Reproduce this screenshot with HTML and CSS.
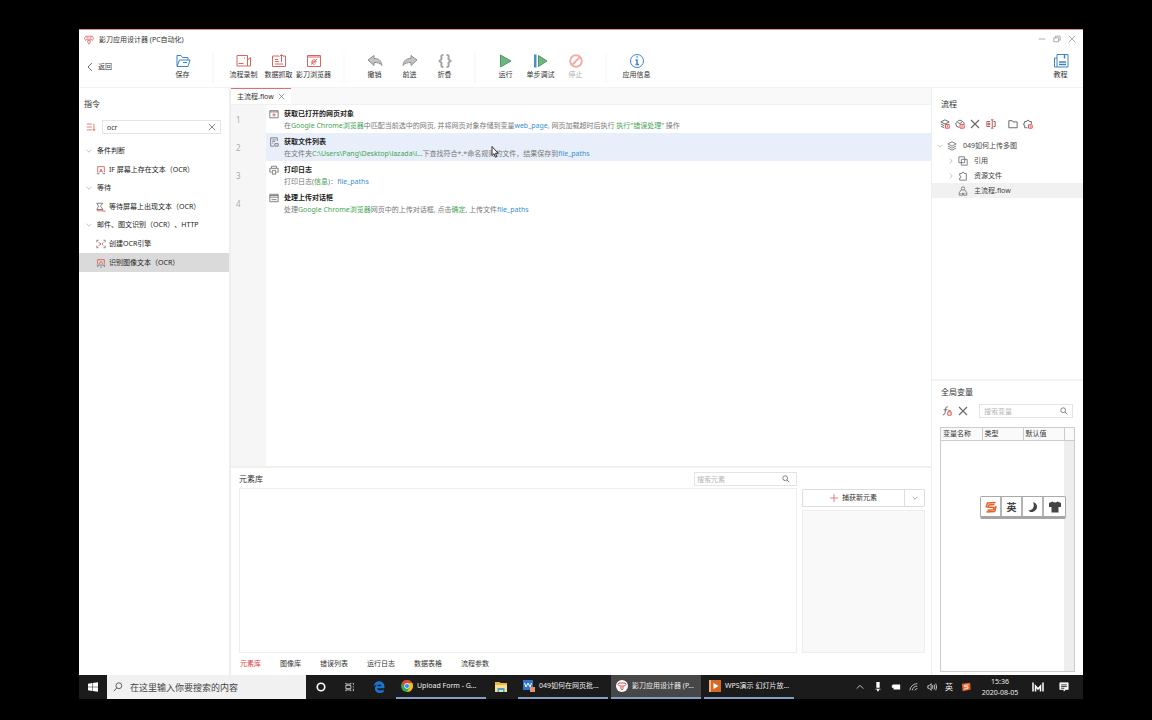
FILE: index.html
```html
<!DOCTYPE html>
<html lang="zh-CN">
<head>
<meta charset="utf-8">
<title>影刀应用设计器 (PC自动化)</title>
<link rel="stylesheet" href="styles.css">
</head>
<body>
<svg class="defs" aria-hidden="true">
  <symbol id="close" viewBox="0 0 10 10"><path d="M1 1l8 8M9 1l-8 8"/></symbol>
  <symbol id="down" viewBox="0 0 10 10"><path d="M1 3l4 4 4-4"/></symbol>
  <symbol id="right" viewBox="0 0 10 10"><path d="M3 1l4 4-4 4"/></symbol>
  <symbol id="search" viewBox="0 0 10 10"><circle cx="4" cy="4" r="3"/><path d="M6.2 6.2l3 3"/></symbol>
  <symbol id="layers" viewBox="0 0 12 12"><path d="M6 1l5 2.500L6 6 1 3.500zM1 6l5 2.500L11 6M1 8.500L6 11l5-2.500"/></symbol>
  <symbol id="logo" viewBox="0 0 12 12"><path d="M2 1.500h8L11.500 4 10 6.500 8.500 5h-5L2 6.500.500 4zM3 3.300h2.200M6.800 3.300H9M4.500 6.500h3v2L6 11 4.500 8.500z"/></symbol>
  <symbol id="sogou" viewBox="0 0 12 12"><path d="M9.500 3.500L4 4 3 6l6 .500-.500 2.300-6 .400M10.500 1.500L2.500 2 1 6.500M9.800 10.500L1.500 11M11 5l-1.200 5.500"/></symbol>
</svg>
<div class="app">
  <header class="titlebar">
    <svg class="logo red"><use href="#logo"/></svg>
    <h1>影刀应用设计器 (PC自动化)</h1>
    <div class="winbtns">
      <button aria-label="最小化"><svg viewBox="0 0 10 10"><path d="M1 5h8"/></svg></button>
      <button aria-label="还原"><svg viewBox="0 0 10 10"><path d="M1 3.500h6v5H1zM3 3.500v-2h6v5H7"/></svg></button>
      <button aria-label="关闭"><svg><use href="#close"/></svg></button>
    </div>
  </header>

  <nav class="toolbar">
    <button class="back"><svg viewBox="0 0 10 10"><path d="M7 1L3 5l4 4"/></svg>返回</button>
    <button class="tool"><svg class="blue" viewBox="0 0 16 16"><path d="M2 13V2.500h4l1.500 2H13V7M2 13.500L4.500 7H15l-2 6.500z"/><path d="M8 9.500h4"/></svg>保存</button>
    <i class="sep"></i>
    <button class="tool"><svg class="red" viewBox="0 0 16 16"><path d="M1 2.500h10.500V13H1zM11.500 7l3-2.500V13h-3M2.500 10.500h5M8 5h1"/></svg>流程录制</button>
    <button class="tool"><svg class="red" viewBox="0 0 16 16"><path d="M8 3H1.500v10.500h13V3H12M4 6.500h3M4 8.500h4M4 11h8M10.500 9V1.500M8.500 3.500l2-2 2 2"/></svg>数据抓取</button>
    <button class="tool"><svg class="red" viewBox="0 0 16 16"><path d="M1.500 2.500h13v11h-13zM1.500 4h13"/><path d="M6 9h4.200a2.200 2.200 0 1 0-.8 1.700M5 11.500L11 6"/></svg>影刀浏览器</button>
    <i class="sep"></i>
    <button class="tool"><svg viewBox="0 0 16 16"><path class="gray" d="M1 7l6-4.500v3c4.500 0 7.500 2 8 7-2-2.500-4.500-3-8-3v3z"/></svg>撤销</button>
    <button class="tool"><svg viewBox="0 0 16 16"><path class="gray" d="M15 7L9 2.500v3c-4.500 0-7.500 2-8 7 2-2.500 4.500-3 8-3v3z"/></svg>前进</button>
    <button class="tool"><svg viewBox="0 0 16 16"><path class="brace" d="M6.500 2C3.500 2 4.500 3 4.500 6L2.500 8l2 2c0 3-1 4 2 4M9.500 2c3 0 2 1 2 4l2 2-2 2c0 3 1 4-2 4"/></svg>折叠</button>
    <i class="sep"></i>
    <button class="tool"><svg viewBox="0 0 16 16"><path class="run" d="M2.500 2L13 8 2.500 14z"/></svg>运行</button>
    <button class="tool"><svg viewBox="0 0 16 16"><path class="bar" d="M1 1.500h2.500v13H1z"/><path class="run" d="M5.500 2.500L14 8l-8.500 5.500z"/></svg>单步调试</button>
    <button class="tool off" disabled><svg viewBox="0 0 16 16"><g class="stop"><circle cx="8" cy="8" r="5.800"/><path d="M4 12l8-8"/></g></svg>停止</button>
    <i class="sep"></i>
    <button class="tool"><svg class="blue" viewBox="0 0 16 16"><circle cx="8" cy="8" r="6.500"/><path class="heavy" d="M6.500 7H8v4.500M6.500 11.500h3.500M7.500 4h1.200"/></svg>应用信息</button>
    <button class="tool last"><svg class="blue" viewBox="0 0 16 16"><path d="M4 1.500h11V14H1.500V5H4zM4 5v9"/><path class="heavy" d="M11.500 1.500v4M6 9h7M6 11.500h7"/></svg>教程</button>
  </nav>

  <main class="main">
    <aside class="left">
      <h2>指令</h2>
      <div class="filter">
        <svg class="red" viewBox="0 0 12 12"><path d="M1 2.500h6M1 6h6M1 9.500h6M9.500 2v8M8 8.500l1.500 2 1.500-2"/></svg>
        <div class="field"><input type="text" value="ocr" aria-label="搜索指令"><button aria-label="清除"><svg><use href="#close"/></svg></button></div>
      </div>
      <ul class="cmds">
        <li class="group"><svg class="chev"><use href="#down"/></svg>条件判断</li>
        <li><svg viewBox="0 0 12 12"><path class="rs" d="M2 9V2h8v7M4 9l2-4 2 4"/><path d="M1 10.500h3M8 10.500h3M5 7.500h2"/></svg>IF 屏幕上存在文本（OCR）</li>
        <li class="group"><svg class="chev"><use href="#down"/></svg>等待</li>
        <li><svg viewBox="0 0 12 12"><path d="M1 1.500h7L5.500 5 8 9H1l2-4z"/><path class="rs" d="M1 10.500h6M8 8v3h3.500"/></svg>等待屏幕上出现文本（OCR）</li>
        <li class="group"><svg class="chev"><use href="#down"/></svg>邮件、图文识别（OCR）、HTTP</li>
        <li><svg viewBox="0 0 12 12"><path d="M3 1.500H1v2.500M9 1.500h2V4M3 10.500H1V8M9 10.500h2V8"/><path class="rs" d="M3 4l3 2-3 2M9 4L7 6l2 2"/></svg>创建OCR引擎</li>
        <li class="on"><svg viewBox="0 0 12 12"><path class="rs" d="M2 7V2h8v5M4 7l2-3 2 3"/><path d="M1 8.500h10M2 11V9M10 11V9M5 11h2"/></svg>识别图像文本（OCR）</li>
      </ul>
    </aside>

    <section class="center">
      <div class="tabs"><div class="tab"><span>主流程.flow</span><button aria-label="关闭标签"><svg><use href="#close"/></svg></button></div></div>
      <div class="editor">
        <ol class="steps">
          <li><span class="num">1</span><div class="step"><svg viewBox="0 0 12 12"><path d="M1 2h10v8.500H1zM1 3.500h10"/><path class="rs" d="M6 5v4M4 7h4"/></svg><div><h3>获取已打开的网页对象</h3><p>在<b>Google Chrome浏览器</b>中匹配当前选中的网页, 并将网页对象存储到变量<a href="#v">web_page</a>, 网页加载超时后执行 <b>执行"错误处理"</b> 操作</p></div></div></li>
          <li class="on"><span class="num">2</span><div class="step"><svg viewBox="0 0 12 12"><path d="M2 1h8v4M2 1v10h4M4 3.500h4M4 5.500h3M4 7.500h1M7 8h4v3H7z"/></svg><div><h3>获取文件列表</h3><p>在文件夹<b>C:\Users\Pang\Desktop\lazada\l...</b>下查找符合*.*命名规则的文件，结果保存到<a href="#v">file_paths</a></p></div></div></li>
          <li><span class="num">3</span><div class="step"><svg viewBox="0 0 12 12"><path d="M3 3.500V1.500h6v2M3 8.500H1V4h10v4.500H9M4 6.500h4V11H4z"/></svg><div><h3>打印日志</h3><p>打印日志(<b>信息</b>)：<a href="#v">file_paths</a></p></div></div></li>
          <li><span class="num">4</span><div class="step"><svg viewBox="0 0 12 12"><path d="M1 1.500h10v9H1zM1 3h10M1 5h10M3 8h6"/></svg><div><h3>处理上传对话框</h3><p>处理<b>Google Chrome浏览器</b>网页中的上传对话框, 点击<b>确定</b>, 上传文件<a href="#v">file_paths</a></p></div></div></li>
        </ol>
        <svg class="cursor" viewBox="0 0 8 12"><path d="M1 .500v9l2-1.800 1.500 3.500 1.300-.600L4.400 7.300H7z"/></svg>
      </div>
      <div class="library">
        <div class="items">
          <div class="libhead"><h2>元素库</h2><div class="field"><input type="text" placeholder="搜索元素" aria-label="搜索元素"><svg><use href="#search"/></svg></div></div>
          <div class="list"></div>
        </div>
        <div class="capture">
          <div class="split"><button><svg class="red" viewBox="0 0 10 10"><path d="M5 0v10M0 5h10"/></svg>捕获新元素</button><button class="more" aria-label="更多"><svg><use href="#down"/></svg></button></div>
          <div class="preview"></div>
        </div>
      </div>
      <div class="bottomtabs"><button class="on">元素库</button><button>图像库</button><button>错误列表</button><button>运行日志</button><button>数据表格</button><button>流程参数</button></div>
    </section>

    <aside class="right">
      <section class="flows">
        <h2>流程</h2>
        <div class="acts">
          <button aria-label="新建流程"><svg viewBox="0 0 12 12"><path d="M6 1l5 2.500L6 6 1 3.500zM1 6l4 2M1 8.500L5 10.500"/><path class="rs" d="M6.500 6.500H11V11H6.500zM8.700 7.500v2.500"/></svg></button>
          <button aria-label="新建代码"><svg viewBox="0 0 12 12"><path d="M5 10a4 4 0 0 1-4-4c0-2 1-2.500 2-3 .500-2 5-2 6 0 1 .500 2 1 2 3M3 4l3 1.500L9 3"/><path class="rs" d="M6 6.500h5V11H6zM8.500 7.500v2.500"/></svg></button>
          <button aria-label="删除"><svg><use href="#close"/></svg></button>
          <button class="w2" aria-label="重命名"><svg viewBox="0 0 12 12"><path class="rs" d="M5 3H1v6h4M7.500 1v10M6 1h3M6 11h3"/><path d="M2.500 5h2v2h-2zM9 3h2v6H9"/></svg></button>
          <button class="w3" aria-label="新建文件夹"><svg viewBox="0 0 12 12"><path d="M1 2h4l1 1.500h5v7H1z"/></svg></button>
          <button aria-label="导入"><svg viewBox="0 0 12 12"><path d="M5 10.500H2V7.500H1V5h1V3h2.500a1.500 1.500 0 0 1 3 0H10v3"/><path class="rs" d="M6.500 7H11v4H6.500zM8.700 8v2"/></svg></button>
        </div>
        <ul class="tree">
          <li><svg class="chev"><use href="#down"/></svg><svg><use href="#layers"/></svg>049如何上传多图</li>
          <li class="sub"><svg class="chev"><use href="#right"/></svg><svg viewBox="0 0 12 12"><path d="M1 1h7v7H1zM4 4h7v7H4z"/></svg>引用</li>
          <li class="sub"><svg class="chev"><use href="#right"/></svg><svg viewBox="0 0 12 12"><path d="M2 3h2.500a1.500 1.500 0 0 1 3 0H10v8H2V8.500a1.500 1.500 0 0 0 0-3z"/></svg>资源文件</li>
          <li class="sub on"><i class="chev"></i><svg viewBox="0 0 12 12"><circle cx="6" cy="3" r="2"/><path d="M4 4.500L1.500 8v3h4V8.500h1V11h4V8L8 4.500M3 9h1M8 9h1"/></svg>主流程.flow</li>
        </ul>
      </section>
      <section class="vars">
        <h2>全局变量</h2>
        <div class="varbar">
          <button aria-label="新建变量"><svg viewBox="0 0 12 12"><path d="M7 1C4 .500 4.500 3 4 6s-.500 5-3 4.500M2 4.500h4.500"/><path class="rs" d="M7 7h4v4H7zM7.500 5l3 1"/></svg></button>
          <button aria-label="删除变量"><svg><use href="#close"/></svg></button>
          <div class="field"><input type="text" placeholder="搜索变量" aria-label="搜索变量"><svg><use href="#search"/></svg></div>
        </div>
        <div class="grid">
          <table><thead><tr><th>变量名称</th><th>类型</th><th>默认值</th><th class="end"></th></tr></thead></table>
          <div class="scroll"></div>
        </div>
      </section>
    </aside>
  </main>

  <footer class="taskbar">
    <button class="start" aria-label="开始"><svg viewBox="0 0 12 12"><path d="M0 2l5-.700v4.300H0zM5.600 1.200L12 .300v5.300H5.600zM0 6.300h5v4.400L0 10zM5.600 6.300H12v5.400l-6.400-.900z"/></svg></button>
    <label class="ask"><svg viewBox="0 0 12 12"><circle cx="7" cy="4.500" r="3.500"/><path d="M4.500 7L1 11"/></svg><input type="text" placeholder="在这里输入你要搜索的内容" aria-label="搜索"></label>
    <button class="pin" aria-label="Cortana"><svg viewBox="0 0 12 12"><circle class="ring" cx="6" cy="6" r="4.500"/></svg></button>
    <button class="pin" aria-label="任务视图"><svg viewBox="0 0 12 12"><path d="M1 1v1.500h6V1M1 4h6v4H1zM1 11V9.500h6V11M10 1v2.500M10 5v1.500M10 8v3"/></svg></button>
    <button class="pin edge" aria-label="Edge"><svg viewBox="0 0 12 12"><path d="M.500 5.500C1.500-1.500 11.500-1.500 11.500 6v1.300H4.200c.300 2.700 4 2.800 6.500 1.300v2.500c-4 2-9.200.400-8.700-4 .100-1.500 1-2.700 2.300-3.300C3 3.700 1.300 4.300.500 5.500zM4.400 5.200h4c0-2.200-3.500-2.400-4 0z"/></svg></button>
    <button class="task"><svg viewBox="0 0 12 12"><circle cx="6" cy="6" r="6" fill="#35a853"/><path fill="#e94335" d="M.800 3A6 6 0 0 1 11.200 3H6a3 3 0 0 0-2.600 4.500z"/><path fill="#fbbc05" d="M11.200 3A6 6 0 0 1 6 12l2.600-4.500A3 3 0 0 0 6 3z"/><circle cx="6" cy="6" r="2.700" fill="#fff"/><circle cx="6" cy="6" r="2.100" fill="#4285f4"/></svg><span>Upload Form - G...</span></button>
    <button class="pin folder" aria-label="文件资源管理器"><svg viewBox="0 0 12 12"><path fill="#e8b64c" d="M0 1h4.500l1 1H12v9H0z"/><path fill="#fbe08a" d="M0 4h12v7H0z"/><path fill="#4a9fd8" d="M2.500 7h7v4H8V9H4v2H2.500z"/></svg></button>
    <button class="task"><svg viewBox="0 0 12 12"><path fill="#2f74d0" d="M0 0h10v10H0z"/><path stroke="#fff" fill="none" d="M1.500 3l1.500 4 2-4 2 4 1.500-4"/><path fill="#ee8e6c" d="M7 7h5v5H7z"/></svg><span>049如何在网页批...</span></button>
    <button class="task active"><svg viewBox="0 0 12 12"><circle cx="6" cy="6" r="6" fill="#fff"/><path fill="none" stroke="#d6504f" d="M3 3h6l1 1.500L8.500 6h-5L2 4.500zM5 6.500v2L6 10l1-1.500v-2"/></svg><span>影刀应用设计器 (P...</span></button>
    <button class="task"><svg viewBox="0 0 12 12"><path fill="#d56a22" d="M0 0h12v12H0z"/><path fill="#f0b088" d="M0 0h2v12H0z"/><path fill="#fff" d="M4.500 3l5 3-5 3z"/></svg><span>WPS演示 幻灯片放...</span></button>
    <div class="tray">
      <svg viewBox="0 0 12 12"><path d="M2 8l4-4 4 4"/></svg>
      <svg viewBox="0 0 12 12"><path class="solid" d="M4 0h4v7H4zM3 8h6v1H7v2H5V9H3z"/></svg>
      <svg viewBox="0 0 12 12"><path class="solid" d="M2 3h9v6H3V7H1V4h1z"/></svg>
      <svg viewBox="0 0 12 12"><path d="M1 10a9 9 0 0 1 9-8M4 10a6 6 0 0 1 6-5M7 10a3 3 0 0 1 3-2"/></svg>
      <svg viewBox="0 0 12 12"><path d="M1 4.500h1.500L5 2v8L2.500 7.500H1zM6.500 4q1 2 0 4M8.500 3q1.500 3 0 6M10.500 2q2 4 0 8"/></svg>
      <span>英</span>
      <svg viewBox="0 0 12 12"><path fill="#e8622c" stroke="none" d="M1 2l10-1 .500 8L2 11z"/><path class="white" d="M9 3.500L4 4v1.500l4.500.500L8 8 3.500 8.500"/></svg>
    </div>
    <time>15:36<br>2020-08-05</time>
    <svg class="mlogo" viewBox="0 0 12 12"><path d="M1 1.500v9M11 1.500v9M3.500 10.500V5L6 8l2.500-3v5.500"/></svg>
    <button class="note" aria-label="通知"><svg viewBox="0 0 12 12"><path fill="#fff" d="M1 1h10v8H8l-2 2V9H1z"/><path stroke="#1b1b1b" d="M2.500 3.500h7M2.500 5.500h7M2.500 7.500h4"/></svg></button>
  </footer>

  <div class="ime">
    <button aria-label="搜狗输入法"><svg class="so"><use href="#sogou"/></svg></button>
    <button>英</button>
    <button aria-label="半角"><svg viewBox="0 0 12 12"><path d="M6 1c5 1 6 8-.500 10-2 .300-3.500-.500-4-1.500C6 9.500 8 5 6 1z"/></svg></button>
    <button aria-label="皮肤"><svg viewBox="0 0 12 12"><path d="M0 2l3.500-1.500Q6 2.500 8.500.500L12 2v4H9.500v5.500h-7V6H0z"/></svg></button>
  </div>
</div>
</body>
</html>
```
FILE: styles.css
```css
* { box-sizing: border-box; margin: 0; padding: 0; }
body {
  height: 100vh;
  padding: 29px 69px 21px 79px;
  background: #000;
  color: #333;
  font: 7px/10px "Noto Sans", "Noto Sans CJK SC", sans-serif;
  text-spacing-trim: space-all;
}
button, input { font: inherit; color: inherit; background: none; border: 0; outline: 0; }
button { display: flex; align-items: center; justify-content: center; }
ul, ol { list-style: none; }
a { color: #3a8fd0; text-decoration: none; }
svg { width: 10px; height: 10px; flex: none; fill: none; stroke: #6c6c6c; stroke-width: 1; }
.defs { display: none; }
.red { stroke: #dc6460; }
.blue { stroke: #3f83c6; }
.rs { stroke: #d9534f; }
h2 { font-size: 8px; line-height: 12px; font-weight: 400; }

.app { position: relative; height: 100%; display: flex; flex-direction: column; background: #fff; border-top: 1px solid #d98a84; }
.titlebar { height: 18px; flex: none; display: flex; align-items: center; gap: 5px; padding: 2px 7px 0 5px; }
.titlebar h1 { font-size: 7px; font-weight: 400; flex: 1; }
.winbtns { display: flex; gap: 7px; padding-bottom: 2px; }
.winbtns svg { width: 8px; height: 8px; stroke: #999; }

.toolbar { height: 39px; flex: none; display: flex; align-items: flex-start; padding-top: 5px; }
.back { width: 86px; height: 28px; justify-content: flex-start; gap: 3px; padding-left: 6px; }
.tool { width: 35px; flex-direction: column; gap: 1px; white-space: nowrap; }
.tool svg { width: 16px; height: 16px; }
.sep { width: 2px; height: 30px; margin: 0 12px; background: #fafafa; }
.last { margin: 0 5px 0 auto; }
.off { color: #aaa; }
.gray { fill: #c4c4c4; stroke: #909090; }
.brace { stroke: #a5a5a5; stroke-width: 2; }
.run { fill: #71b483; stroke: #4b9a60; }
.bar { fill: #4c8bc8; stroke: none; }
.stop { stroke: #f2aca7; stroke-width: 2; }
.heavy { stroke-width: 1.500; }

.main { flex: 1; min-height: 0; display: grid; grid-template-columns: 151px 1fr 151px; border-top: 1px solid #f3f3f3; }
.left { padding-top: 10px; border-right: 1px solid #eee; }
.left h2 { padding-left: 5px; }
.filter { display: flex; align-items: center; gap: 6px; padding: 10px 8px 8px 7px; }
.field { flex: 1; min-width: 0; height: 14px; display: flex; align-items: center; padding: 0 4px; border: 1px solid #e4e4e4; }
.field input { flex: 1; min-width: 0; height: 12px; }
.field svg { width: 8px; height: 8px; }
.field input::placeholder { color: #b5b5b5; }
.cmds li { display: flex; align-items: center; gap: 3px; height: 19px; padding-left: 17px; white-space: nowrap; color: #222; }
.cmds .group { height: 18px; padding-left: 7px; gap: 5px; }
.cmds .on { background: #dadada; }
.chev { width: 6px; height: 6px; stroke: #999; }

.center { min-width: 0; display: flex; flex-direction: column; border-left: 1px solid #eee; border-right: 1px solid #eee; }
.tabs { height: 17px; flex: none; display: flex; background: #f9f9f9; border-bottom: 1px solid #f1f1f1; }
.tab { display: flex; align-items: center; gap: 4px; padding: 0 6px; background: #fff; border-top: 1px solid #d9736e; }
.tab svg { width: 7px; height: 7px; }
.editor { position: relative; flex: 1; min-height: 0; background: linear-gradient(to right, #f6f6f7 35px, #fff 35px); }
.steps li { display: flex; height: 28px; }
.num { width: 35px; padding: 10px 0 0 5px; font-size: 8px; color: #aaa; }
.step { flex: 1; min-width: 0; display: flex; gap: 5px; padding: 4px 0 0 3px; white-space: nowrap; }
.on .step { background: #e8effa; }
.step h3 { font-size: 7px; margin-bottom: 2px; color: #222; }
.step p { color: #777; }
.step b { font-weight: 400; color: #3fa552; }
.cursor { position: absolute; left: 260px; top: 41px; width: 8px; height: 12px; fill: #fff; stroke: #333; }
.library { flex: none; height: 187px; display: flex; gap: 5px; padding: 4px 6px 0 8px; border-top: 2px solid #f0f0f0; }
.items { flex: 1; min-width: 0; display: flex; flex-direction: column; }
.libhead { display: flex; justify-content: space-between; align-items: center; padding-bottom: 2px; }
.libhead .field { flex: none; width: 103px; padding: 0 6px 0 2px; }
.list { flex: 1; border: 1px solid #eee; }
.capture { width: 123px; display: flex; flex-direction: column; gap: 3px; padding-top: 17px; }
.split { height: 18px; display: flex; border: 1px solid #ddd; border-radius: 1px; }
.split button { flex: 1; gap: 4px; }
.split svg { width: 8px; height: 8px; }
.split .more { flex: none; width: 20px; border-left: 1px solid #ddd; }
.split .more svg { width: 6px; height: 6px; }
.preview { flex: 1; background: #f9f9f9; border: 1px solid #eee; }
.bottomtabs { flex: none; height: 22px; display: flex; align-items: center; gap: 19px; padding-left: 9px; }
.bottomtabs .on { color: #d9413d; }

.right { display: flex; flex-direction: column; }
.flows { flex: 1; min-height: 0; padding-top: 10px; border-bottom: 2px solid #f3f3f3; }
.right h2 { padding-left: 9px; }
.acts { display: flex; align-items: center; gap: 5px; padding: 9px 0 9px 8px; }
.acts svg, .varbar > button svg { stroke-width: 1.200; }
.acts .w2 { margin-left: 1px; }
.acts .w3 { margin-left: 7px; }
.tree li { height: 15px; display: flex; align-items: center; gap: 4px; padding-left: 5px; white-space: nowrap; color: #444; }
.tree li svg:not(.chev) { margin-right: 2px; }
.tree .sub { padding-left: 16px; }
.tree .on { background: #f1f1f1; }
.vars { height: 294px; flex: none; display: flex; flex-direction: column; padding: 5px 8px 3px 0; }
.varbar { display: flex; align-items: center; gap: 6px; padding: 6px 2px 9px 10px; }
.varbar .field { margin-left: 5px; }
.grid { flex: 1; display: flex; flex-direction: column; margin-left: 8px; border: 1px solid #ccc; }
table { width: 100%; table-layout: fixed; border-collapse: collapse; background: #fafafa; }
th { height: 12px; padding-left: 2px; font-weight: 400; text-align: left; white-space: nowrap; border-right: 1px solid #ccc; border-bottom: 1px solid #ccc; }
th.end { width: 10px; border-right: 0; }
.scroll { flex: 1; align-self: flex-end; width: 10px; background: #eee; }

.taskbar { height: 24px; flex: none; display: flex; align-items: center; background: #1b1b1b; color: #eee; }
.taskbar svg { stroke: #ddd; }
.start { width: 28px; }
.start svg { fill: #fff; stroke: none; }
.ask { width: 199px; align-self: stretch; display: flex; align-items: center; gap: 7px; padding: 0 6px; background: #f1f1f1; font-size: 9px; }
.ask svg { stroke: #444; }
.ask input { flex: 1; min-width: 0; height: 20px; }
.ask input::placeholder { color: #444; }
.pin { width: 29px; }
.ring { stroke-width: 2; stroke: #fff; }
.edge svg { width: 12px; height: 12px; fill: #1976d2; stroke: none; }
.folder svg, .task svg { width: 12px; height: 12px; stroke: none; }
.task { width: 90px; height: 24px; justify-content: flex-start; gap: 4px; margin-left: 3px; padding-left: 5px; border-bottom: 2px solid #7f9fc6; white-space: nowrap; }
.active { background: #474747; }
.tray { margin: 0 2px 0 auto; display: flex; align-items: center; gap: 8px; }
.tray span { font-size: 8px; }
.solid { fill: #fff; stroke: none; }
.tray .white { stroke: #fff; }
time { width: 54px; text-align: center; line-height: 11px; }
.taskbar .mlogo { width: 12px; height: 12px; margin: 0 9px 0 5px; stroke: #fff; stroke-width: 1.500; }
.note { width: 22px; margin-right: 8px; }

.ime { position: absolute; right: 17px; bottom: 180px; display: flex; background: #fff; border: 1px solid #aaa; border-bottom: 3px solid #a5a5a5; border-radius: 2px; }
.ime button { width: 21px; height: 19px; border-right: 2px solid #b5b5b5; font-size: 10px; font-weight: 700; color: #444; }
.ime button:last-child { border-right: 0; }
.ime svg { width: 12px; height: 12px; fill: #444; stroke: none; }
.ime .so { fill: none; stroke: #e4602a; stroke-width: 1.500; }
```
